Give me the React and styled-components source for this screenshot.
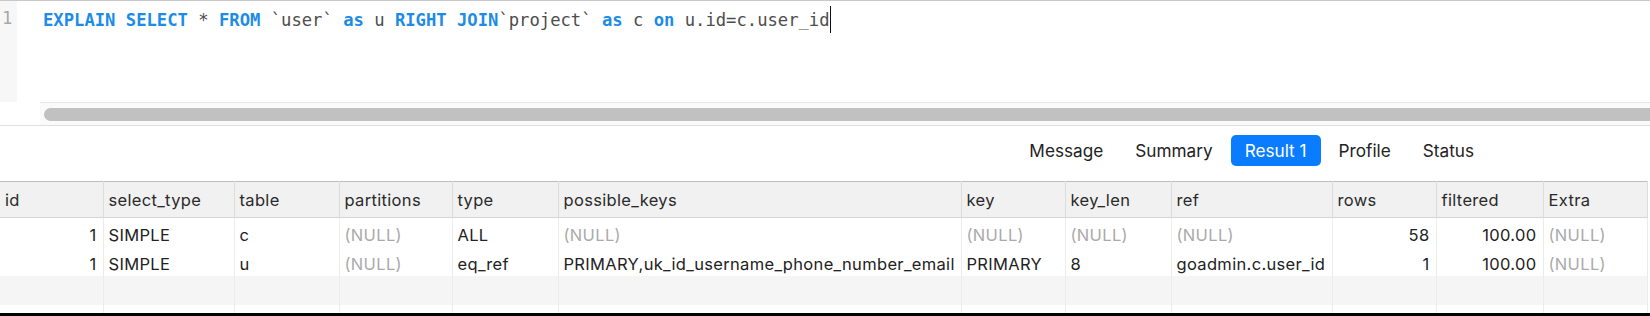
import React from 'react';
import styled, { createGlobalStyle } from 'styled-components';

const GlobalStyle = createGlobalStyle`
  html, body {
    margin: 0;
    padding: 0;
    background: #ffffff;
  }
  body {
    font-family: Inter, "Liberation Sans", Arial, sans-serif;
  }
`;

const Page = styled.div`
  width: 1650px;
  height: 316px;
  overflow: hidden;
  display: flex;
  flex-direction: column;
  background: #ffffff;
  border-bottom: 3px solid #000000;
  box-sizing: border-box;
`;

// editor
const Editor = styled.div`
  height: 126px;
  flex-shrink: 0;
  display: flex;
  flex-direction: column;
  border-top: 1px solid #c9c9c9;
  border-bottom: 1px solid #dedede;
  box-sizing: border-box;
`;

const CodeArea = styled.div`
  flex: 1;
  display: flex;
`;

const Gutter = styled.div`
  width: 17px;
  background: #f7f7f7;
  color: #a8a8a8;
  font-family: "DejaVu Sans Mono", monospace;
  font-size: 17.2px;
  line-height: 24px;
  padding: 5px 0 0 2px;
  box-sizing: border-box;
`;

const Code = styled.div`
  padding: 5px 0 0 26px;
  font-family: "DejaVu Sans Mono", monospace;
  font-size: 17.2px;
  line-height: 24px;
  color: #4d4d4d;
  white-space: pre;
`;

const Keyword = styled.span`
  color: #1d8ce6;
  font-weight: bold;
`;

const Caret = styled.span`
  display: inline-block;
  width: 1px;
  height: 27px;
  background: #111111;
  vertical-align: -7px;
`;

const ScrollTrack = styled.div`
  margin-left: 40px;
  height: 23px;
  border-top: 1px solid #e6e6e6;
  background: #fafafa;
  padding: 5px 0 0 4px;
  box-sizing: border-box;
`;

const ScrollThumb = styled.div`
  height: 13px;
  border-radius: 7px 0 0 7px;
  background: #c1c1c1;
`;

// tabs
const TabBar = styled.div`
  height: 55px;
  flex-shrink: 0;
  display: flex;
  justify-content: flex-end;
  align-items: flex-start;
  gap: 4px;
  padding: 9px 162px 0 0;
  box-sizing: border-box;
`;

const Tab = styled.div`
  height: 31px;
  padding: 0 14px;
  display: flex;
  align-items: center;
  border-radius: 5px;
  font-size: 17.2px;
  color: ${(p) => (p.$active ? '#ffffff' : '#222222')};
  background: ${(p) => (p.$active ? '#0a7cff' : 'transparent')};
`;

// table
const Table = styled.table`
  border-collapse: collapse;
  table-layout: fixed;
  width: 1647px;
  font-size: 16.5px;
  letter-spacing: 0.33px;
  color: #222222;
`;

const HeadRow = styled.tr`
  background: #f1f1f1;
  border-top: 1px solid #bdbdbd;
  border-bottom: 1px solid #d4d4d4;
`;

const HeadCell = styled.th`
  height: 34px;
  padding: 1px 5px 0;
  text-align: left;
  font-weight: normal;
  color: #2a2a2a;
  border-right: 1px solid #dcdcdc;
  white-space: nowrap;
  overflow: hidden;
`;

const Row = styled.tr`
  background: ${(p) => (p.$stripe ? '#f5f5f5' : '#ffffff')};
`;

const Cell = styled.td`
  height: 25px;
  padding: 4px 6px 0 5px;
  text-align: ${(p) => (p.$right ? 'right' : 'left')};
  color: ${(p) => (p.$null ? '#aaaaaa' : '#222222')};
  border-right: 1px solid #ececec;
  white-space: nowrap;
  overflow: hidden;
`;

const columns = [
  { name: 'id', width: 103, right: true },
  { name: 'select_type', width: 131 },
  { name: 'table', width: 105 },
  { name: 'partitions', width: 113 },
  { name: 'type', width: 106 },
  { name: 'possible_keys', width: 403 },
  { name: 'key', width: 104 },
  { name: 'key_len', width: 106 },
  { name: 'ref', width: 161 },
  { name: 'rows', width: 104, right: true },
  { name: 'filtered', width: 107, right: true },
  { name: 'Extra', width: 104 },
];

const rows = [
  ['1', 'SIMPLE', 'c', null, 'ALL', null, null, null, null, '58', '100.00', null],
  ['1', 'SIMPLE', 'u', null, 'eq_ref', 'PRIMARY,uk_id_username_phone_number_email', 'PRIMARY', '8', 'goadmin.c.user_id', '1', '100.00', null],
];

const tabs = ['Message', 'Summary', 'Result 1', 'Profile', 'Status'];

export default function App() {
  return (
    <Page>
      <GlobalStyle />
      <Editor>
        <CodeArea>
          <Gutter>1</Gutter>
          <Code>
            <Keyword>EXPLAIN</Keyword>{' '}<Keyword>SELECT</Keyword>{' * '}<Keyword>FROM</Keyword>{' `user` '}<Keyword>as</Keyword>{' u '}
            <Keyword>RIGHT</Keyword>{' '}<Keyword>JOIN</Keyword>{'`project` '}<Keyword>as</Keyword>{' c '}<Keyword>on</Keyword>{' u.id=c.user_id'}
            <Caret />
          </Code>
        </CodeArea>
        <ScrollTrack>
          <ScrollThumb />
        </ScrollTrack>
      </Editor>
      <TabBar>
        {tabs.map((t) => (
          <Tab key={t} $active={t === 'Result 1'}>{t}</Tab>
        ))}
      </TabBar>
      <Table>
        <colgroup>
          {columns.map((c) => (
            <col key={c.name} style={{ width: c.width }} />
          ))}
        </colgroup>
        <thead>
          <HeadRow>
            {columns.map((c) => (
              <HeadCell key={c.name}>{c.name}</HeadCell>
            ))}
          </HeadRow>
        </thead>
        <tbody>
          {rows.map((r, i) => (
            <Row key={i}>
              {r.map((v, j) => (
                <Cell key={j} $right={columns[j].right && v !== null} $null={v === null}>
                  {v === null ? '(NULL)' : v}
                </Cell>
              ))}
            </Row>
          ))}
          <Row $stripe>
            {columns.map((c) => (
              <Cell key={c.name} />
            ))}
          </Row>
          <Row>
            {columns.map((c) => (
              <Cell key={c.name} />
            ))}
          </Row>
        </tbody>
      </Table>
    </Page>
  );
}
